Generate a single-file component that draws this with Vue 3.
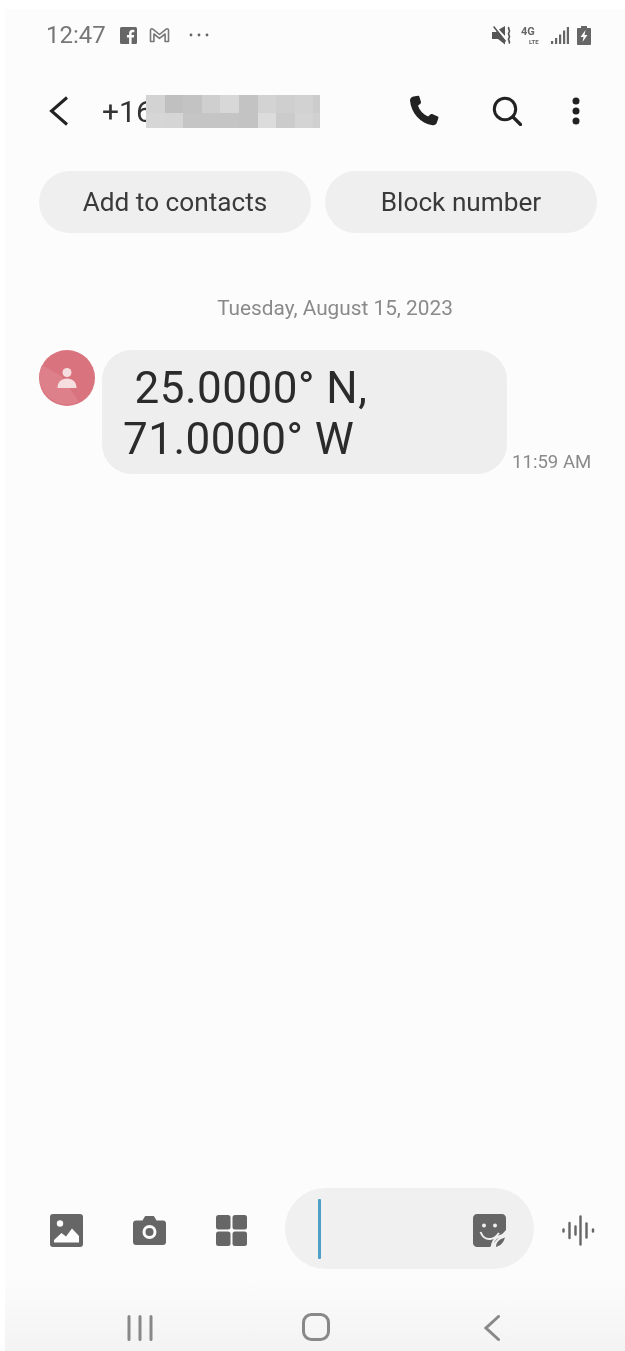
<template>
  <div class="screen">
    <div class="status-bar">
      <span class="clock">12:47</span>
      <svg class="fb" viewBox="0 0 17 17">
        <rect width="17" height="17" rx="1.5" fill="#666" />
        <path d="M11.6 17v-6.4h2.2l.4-2.6h-2.6V6.5c0-.8.3-1.3 1.4-1.3h1.3V2.9c-.4 0-1.1-.1-1.9-.1-2 0-3.3 1.2-3.3 3.4V8H6.9v2.6h2.2V17z" fill="#fcfcfc" />
      </svg>
      <svg class="gmail" viewBox="0 0 21 16">
        <path d="M1.5 14.5V3.2c0-1.3 1.3-1.9 2.3-1.1l6.7 5.4 6.7-5.4c1-.8 2.3-.2 2.3 1.1v11.3h-3.4V7l-5.6 4.4L4.9 7v7.5z" fill="none" stroke="#777" stroke-width="1.6" stroke-linejoin="round" />
      </svg>
      <svg class="more" viewBox="0 0 20 4">
        <circle cx="2" cy="2" r="1.4" fill="#666" />
        <circle cx="10" cy="2" r="1.4" fill="#666" />
        <circle cx="18" cy="2" r="1.4" fill="#666" />
      </svg>
      <div class="status-right">
        <svg class="mute" viewBox="0 0 20 19">
          <path d="M0 6h4l1.500-1.500L13 14v4.500L6 13H0zM7 3.500 13 0v10zM1 1l1.200-1 12 15-1.200 1z" fill="#555" />
          <path d="M17 1c-2 2 2 3 0 5.500s2 3 0 5.500 2 3 0 5.500" fill="none" stroke="#555" stroke-width="1.700" />
        </svg>
        <div class="lte">
          <span class="lte-big">4G</span>
          <span class="lte-small">LTE</span>
        </div>
        <svg class="signal" viewBox="0 0 18 17">
          <rect x="0" y="14" width="2.200" height="3" fill="#666" />
          <rect x="4" y="11" width="2.200" height="6" fill="#666" />
          <rect x="8" y="7.500" width="2.200" height="9.500" fill="#666" />
          <rect x="12" y="3.500" width="2.200" height="13.500" fill="#666" />
          <rect x="15.800" y="0" width="2.200" height="17" fill="#666" />
        </svg>
        <svg class="battery" viewBox="0 0 14 19">
          <path d="M4 0h6v2h3.200c.4 0 .8.4.8.800V18c0 .6-.4 1-1 1H1c-.6 0-1-.4-1-1V2.800C0 2.400.4 2 .8 2H4z" fill="#666" />
          <path d="M8.500 4 3.500 11h3l-1 5 5-7h-3z" fill="#fcfcfc" />
        </svg>
      </div>
    </div>

    <header class="top-bar">
      <svg class="back" viewBox="0 0 20 30">
        <path d="M18 1.500 2.500 15 18 28.500" fill="none" stroke="#222" stroke-width="3" />
      </svg>
      <div class="number">
        <span>+16</span>
        <div class="redact">
          <i v-for="(c, i) in redactCells" :key="i" :style="{ background: c }"></i>
        </div>
      </div>
      <svg class="call" viewBox="0 0 32 32">
        <path d="M5.500 1.500 10 .8c.7-.1 1.100.2 1.300.8l1.700 5.500c.2.600 0 1-.4 1.400L10 10.800c1.500 4.500 5 8.500 10 10.800l2.700-2.300c.5-.4 1-.4 1.500-.2l5.600 2.500c.6.300.8.700.6 1.300l-1.500 4.700c-.6 1.900-2.300 3-4.300 2.700C12.500 28.500 3.200 18.500 2 5.500c-.1-1.800 1.300-3.700 3.500-4z" fill="#222" />
      </svg>
      <svg class="search" viewBox="0 0 30 30">
        <circle cx="13" cy="13" r="10.700" fill="none" stroke="#222" stroke-width="3" />
        <path d="M21 21 28.500 28.500" stroke="#222" stroke-width="3.200" stroke-linecap="round" />
      </svg>
      <svg class="dots" viewBox="0 0 8 28">
        <circle cx="4" cy="4" r="3.500" fill="#222" />
        <circle cx="4" cy="14" r="3.500" fill="#222" />
        <circle cx="4" cy="24" r="3.500" fill="#222" />
      </svg>
    </header>

    <div class="actions">
      <button class="pill">Add to contacts</button>
      <button class="pill">Block number</button>
    </div>

    <div class="date">Tuesday, August 15, 2023</div>

    <div class="message-row">
      <svg class="avatar" viewBox="0 0 56 56">
        <circle cx="28" cy="28" r="28" fill="#d9737e" />
        <path d="M3 15 22 26 40 52A28 28 0 0 1 3 15z" fill="#dd808a" />
        <circle cx="28" cy="22.500" r="4.500" fill="#f5dde0" />
        <path d="M18.500 38c0-6 4-9.500 9.500-9.500s9.500 3.500 9.500 9.500z" fill="#f5dde0" />
      </svg>
      <div class="bubble">{{ message }}</div>
      <span class="time">11:59 AM</span>
    </div>

    <div class="spacer"></div>

    <div class="composer">
      <svg class="tool gallery" viewBox="0 0 33 33">
        <rect width="33" height="33" rx="3" fill="#666" />
        <circle cx="10" cy="9.500" r="3.200" fill="#fcfcfc" />
        <path d="M4 28.500v-2.500l7.500-7 4.500 3.500 6-8 7 7.500v6.500z" fill="#fcfcfc" />
      </svg>
      <svg class="tool camera" viewBox="0 0 33 29">
        <path d="M3 4.500h6.500L11.500 1c.3-.5.7-1 1.500-1h7c.8 0 1.200.5 1.500 1l2 3.500H30c1.700 0 3 1.300 3 3V26c0 1.700-1.300 3-3 3H3c-1.700 0-3-1.300-3-3V7.500c0-1.700 1.300-3 3-3z" fill="#666" />
        <circle cx="16.500" cy="16" r="5.500" fill="none" stroke="#fcfcfc" stroke-width="3" />
      </svg>
      <svg class="tool apps" viewBox="0 0 31 31">
        <rect width="14.500" height="14.500" rx="2.500" fill="#666" />
        <rect x="16.500" width="14.500" height="14.500" rx="2.500" fill="#666" />
        <rect y="16.500" width="14.500" height="14.500" rx="2.500" fill="#666" />
        <rect x="16.500" y="16.500" width="14.500" height="14.500" rx="2.500" fill="#666" />
      </svg>
      <div class="input">
        <span class="caret"></span>
        <svg class="sticker" viewBox="0 0 33 33">
          <path d="M4 0h25c2.200 0 4 1.800 4 4v12L17 33H4c-2.200 0-4-1.800-4-4V4c0-2.200 1.800-4 4-4z" fill="#666" />
          <circle cx="11" cy="11.500" r="2" fill="#f0f0f0" />
          <circle cx="22" cy="11.500" r="2" fill="#f0f0f0" />
          <path d="M7.500 18c2 5 5.500 7.500 10 7 3-.4 6-2.500 8.500-6M19 32c.5-6 5-10 13-11.500" fill="none" stroke="#f0f0f0" stroke-width="2" />
          <path d="M23 33c0-5 3.500-8 9-9.500-1.500 5-4 8-9 9.500z" fill="#666" />
        </svg>
      </div>
      <svg class="voice" viewBox="0 0 33 31">
        <g stroke="#666" stroke-width="2.400" stroke-linecap="round">
          <path d="M1.500 14.500v2" />
          <path d="M7.500 8v15" />
          <path d="M13.500 11.500v8" />
          <path d="M18.500 1.500v28" />
          <path d="M24.500 8.500v14" />
          <path d="M31 14.500v2" />
        </g>
      </svg>
    </div>

    <nav class="nav-bar">
      <svg class="nav-recent" viewBox="0 0 26 26">
        <path d="M2 1.500v23M13 1.500v23M24 1.500v23" stroke="#888" stroke-width="3" stroke-linecap="round" />
      </svg>
      <svg class="nav-home" viewBox="0 0 28 28">
        <rect x="1.500" y="1.500" width="25" height="25" rx="8" fill="none" stroke="#888" stroke-width="3" />
      </svg>
      <svg class="nav-back" viewBox="0 0 16 26">
        <path d="M14.500 1.500 2 13l12.500 11.500" fill="none" stroke="#888" stroke-width="3" stroke-linecap="round" />
      </svg>
    </nav>
  </div>
</template>

<script setup>
const message = " 25.0000° N, 71.0000° W";

// pixelated block over the phone number
const redactCells = [
  "#d3d3d3", "#c0c0c0", "#c3c3c3", "#cfcfcf", "#d8d8d8", "#c3c3c3", "#d3d3d3", "#cfcfcf", "#d2d2d2", "#cccccc",
  "#d6d6d6", "#d5d5d5", "#c5c5c5", "#c5c5c5", "#c5c5c5", "#c3c3c3", "#dcdcdc", "#cbcbcb", "#d4d4d4", "#d0d0d0",
];
</script>

<style>
html,
body {
  background: #fff;
}
</style>

<style scoped>
.screen {
  box-sizing: border-box;
  width: 620px;
  height: 1342px;
  margin: 9px 0 0 5px;
  display: flex;
  flex-direction: column;
  background: #fcfcfc;
  font-family: Roboto, "Liberation Sans", sans-serif;
  filter: blur(0.5px); /* the shot is a soft re-capture */
}

svg {
  display: block;
  flex: none;
}

.status-bar {
  height: 52px;
  padding: 0 34px 0 41px;
  display: flex;
  align-items: center;
  color: #777;
}

.clock {
  font-size: 24px;
  width: 74px;
}

.fb {
  width: 17px;
  height: 17px;
  margin-right: 12px;
}

.gmail {
  width: 21px;
  height: 16px;
  margin-right: 19px;
}

.more {
  width: 20px;
  height: 4px;
}

.status-right {
  margin-left: auto;
  display: flex;
  align-items: center;
}

.mute {
  width: 20px;
  height: 19px;
  margin-right: 9px;
}

.lte {
  width: 20px;
  height: 18px;
  margin-right: 10px;
  margin-top: 1px;
  display: flex;
  flex-direction: column;
  font-weight: 700;
  color: #666;
}

.lte-big {
  height: 10px;
  margin-bottom: 2px;
  font-size: 11px;
  line-height: 10px;
}

.lte-small {
  height: 6px;
  padding-left: 8px;
  font-size: 6px;
  line-height: 6px;
}

.signal {
  width: 18px;
  height: 17px;
  margin-right: 8px;
}

.battery {
  width: 14px;
  height: 19px;
}

.top-bar {
  height: 100px;
  padding-left: 44px;
  display: flex;
  align-items: center;
}

.back {
  width: 20px;
  height: 30px;
  margin-right: 33px;
}

.number {
  position: relative;
  width: 218px;
  margin-right: 88px;
  font-size: 30px;
  color: #333;
}

.redact {
  position: absolute;
  top: 1px;
  left: 44px;
  width: 174px;
  height: 33px;
  display: grid;
  grid-template-columns: repeat(10, 18.6px);
  grid-template-rows: 18px 15px;
  overflow: hidden;
}

.redact i {
  display: block;
}

.call {
  width: 32px;
  height: 32px;
  margin-right: 52px;
}

.search {
  width: 30px;
  height: 30px;
  margin-right: 50px;
}

.dots {
  width: 8px;
  height: 28px;
}

.actions {
  margin-top: 10px;
  padding: 0 28px 0 34px;
  display: flex;
  gap: 14px;
}

.pill {
  flex: 1;
  height: 62px;
  border: none;
  border-radius: 31px;
  background: #efefef;
  color: #3a3a3a;
  font-family: inherit;
  font-size: 26.200px;
}

.date {
  margin-top: 61px;
  padding-left: 40px;
  height: 28px;
  line-height: 28px;
  text-align: center;
  font-size: 20.800px;
  color: #8a8a8a;
}

.message-row {
  margin-top: 28px;
  padding-left: 34px;
  display: flex;
  align-items: flex-end;
}

.avatar {
  width: 56px;
  height: 56px;
  margin-right: 7px;
  align-self: flex-start;
}

.bubble {
  box-sizing: border-box;
  width: 405px;
  height: 124px;
  padding: 13px 21px 0;
  border-radius: 30px;
  background: #eeeeee;
  color: #2b2b2b;
  font-size: 44px;
  letter-spacing: 0.5px;
  line-height: 51px;
  white-space: pre-wrap;
}

.time {
  margin: 0 0 0 5px;
  font-size: 18.600px;
  line-height: 24px;
  color: #8a8a8a;
}

.spacer {
  flex: 1;
}

.composer {
  height: 81px;
  padding-left: 45px;
  display: flex;
  align-items: center;
}

.tool {
  margin-top: 4px;
  margin-right: 50px;
}

.gallery {
  width: 33px;
  height: 33px;
}

.camera {
  width: 33px;
  height: 29px;
}

.apps {
  width: 31px;
  height: 31px;
  margin-right: 38px;
}

.input {
  box-sizing: border-box;
  width: 249px;
  height: 81px;
  padding: 0 28px 0 33px;
  border-radius: 41px;
  background: #f0f0f0;
  display: flex;
  align-items: center;
  justify-content: space-between;
}

.caret {
  width: 2.500px;
  height: 60px;
  border-radius: 1px;
  background: #4f9fc9;
}

.sticker {
  width: 33px;
  height: 33px;
  margin-top: 4px;
}

.voice {
  width: 33px;
  height: 31px;
  margin-left: 28px;
  margin-top: 4px;
}

.nav-bar {
  flex: none;
  box-sizing: border-box;
  height: 73px;
  margin-top: 9px;
  padding: 0 0 10px 122px;
  display: flex;
  align-items: flex-end;
  background: linear-gradient(#fcfcfc, #f3f3f3);
}

.nav-recent {
  width: 26px;
  height: 26px;
  margin-right: 149px;
}

.nav-home {
  width: 28px;
  height: 28px;
  margin-right: 154px;
}

.nav-back {
  width: 16px;
  height: 26px;
}
</style>
